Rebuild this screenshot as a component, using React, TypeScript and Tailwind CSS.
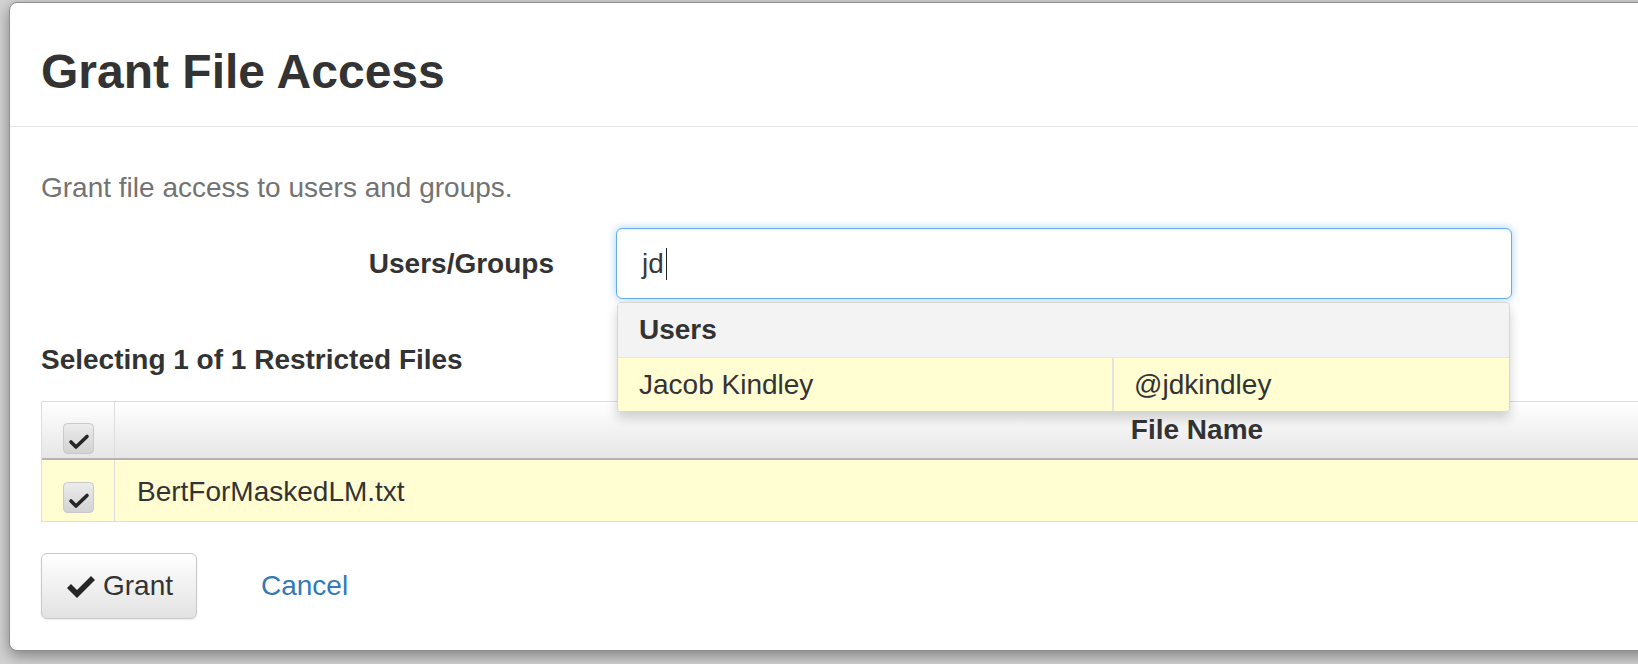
import React from 'react';

function CheckBox() {
  return (
    <svg width="31" height="31" viewBox="0 0 31 31" className="block">
      <defs>
        <linearGradient id="cbg" x1="0" y1="0" x2="0" y2="1">
          <stop offset="0" stopColor="#ececec" />
          <stop offset="1" stopColor="#d2d2d2" />
        </linearGradient>
      </defs>
      <rect x="0.5" y="0.5" width="30" height="30" rx="4" fill="url(#cbg)" stroke="#c9c9c9" />
      <path d="M8 19 L13 24 L24 13.5" fill="none" stroke="#262626" strokeWidth="3.6" strokeLinecap="round" strokeLinejoin="round" />
    </svg>
  );
}

export default function App() {
  return (
    <div className="h-[664px] w-[1638px] overflow-hidden bg-[#d3d3d3] pl-[9px] pt-[2px] font-['Liberation_Sans',Arial,sans-serif] text-[#333]">
      <div className="h-[649px] w-[2300px] rounded-[8px] border border-[#8e8e8e] bg-white shadow-[0_5px_15px_rgba(0,0,0,0.4)]">
        <div className="border-b border-[#e5e5e5] px-[31px] pb-[28px] pt-[42px]">
          <h2 className="text-[48px] font-bold leading-[53px]">Grant File Access</h2>
        </div>

        <div className="px-[31px] pt-[43px]">
          <p className="text-[28px] leading-[35px] text-[#737373]">Grant file access to users and groups.</p>

          <div className="mt-[23px] flex items-center">
            <label className="w-[513px] text-right text-[28px] font-bold leading-[40px]">Users/Groups</label>
            <div className="relative ml-[62px] w-[896px]">
              <div className="flex h-[71px] items-center rounded-[6px] border border-[#66afe9] bg-white pl-[25px] text-[28px] text-[#3a3a3a] shadow-[inset_0_1px_1px_rgba(0,0,0,0.075),0_0_8px_rgba(102,175,233,0.6)]">
                <span>jd</span>
                <span className="ml-[2px] h-[32px] w-px bg-[#222]" />
              </div>

              <div className="absolute left-px right-[2px] top-[74px] z-10 overflow-hidden rounded-[4px] border border-[#d6d6d6] bg-white shadow-[0_6px_12px_rgba(0,0,0,0.175)]">
                <div className="flex h-[55px] items-center border-b border-[#e6e6e6] bg-[#f3f3f3] pl-[21px] text-[28px] font-bold">
                  Users
                </div>
                <div className="flex h-[53px] bg-[#fffdd1] text-[28px]">
                  <div className="flex w-[496px] items-center border-r-2 border-[#e4e4dc] pl-[21px]">Jacob Kindley</div>
                  <div className="flex flex-1 items-center pl-[20px]">@jdkindley</div>
                </div>
              </div>
            </div>
          </div>

          <h4 className="mt-[41px] text-[28px] font-bold leading-[40px]">Selecting 1 of 1 Restricted Files</h4>

          <div className="mt-[21px] w-[2238px] border-l border-t border-[#dddddd]">
            <div className="flex h-[58px] border-b-2 border-[#b3b3b3] bg-gradient-to-b from-white to-[#e6e6e6]">
              <div className="flex w-[73px] items-end justify-center border-r border-[#dddddd] pb-[4px]">
                <CheckBox />
              </div>
              <div className="flex w-[2164px] items-center justify-center text-[28px] font-bold">File Name</div>
            </div>
            <div className="flex h-[62px] border-b border-[#dddddd] bg-[#fffdd1]">
              <div className="flex w-[73px] justify-center border-r border-[#dddddd] pt-[22px]">
                <CheckBox />
              </div>
              <div className="flex items-center pl-[22px] pt-[2px] text-[28px]">BertForMaskedLM.txt</div>
            </div>
          </div>

          <div className="mt-[31px] flex items-center">
            <button className="flex h-[66px] w-[156px] items-center rounded-[6px] border border-[#c8c8c8] bg-gradient-to-b from-white to-[#e2e2e2] pl-[25px] text-[28px] text-[#333] shadow-[0_1px_2px_rgba(0,0,0,0.08)]">
              <svg width="28" height="23" viewBox="0 0 28 23" className="block">
                <polygon points="0,13 4,9 10,15 24,1 28,5 10,23" fill="#262626" />
              </svg>
              <span className="ml-[8px]">Grant</span>
            </button>
            <span className="ml-[64px] text-[28px] text-[#337ab7]">Cancel</span>
          </div>
        </div>
      </div>
    </div>
  );
}
